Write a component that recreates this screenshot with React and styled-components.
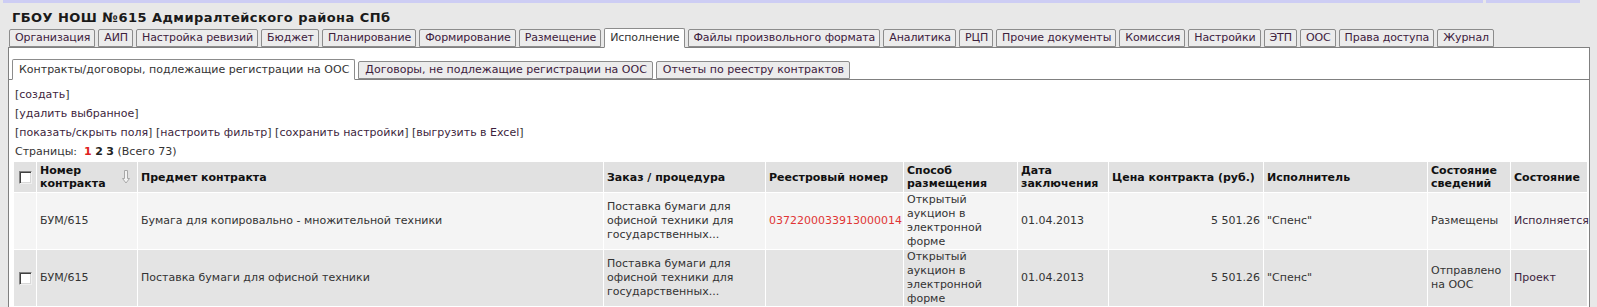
import styled, { createGlobalStyle } from "styled-components"

const GlobalStyle = createGlobalStyle`
    body {
        margin: 0;
        background-color: #e8e8e8;
        font-family: "DejaVu Sans", Verdana, sans-serif;
        font-size: 11px;
        color: #333333;
    }
`

const tabs = [
    "Организация", "АИП", "Настройка ревизий", "Бюджет", "Планирование", "Формирование",
    "Размещение", "Исполнение", "Файлы произвольного формата", "Аналитика", "РЦП",
    "Прочие документы", "Комиссия", "Настройки", "ЭТП", "ООС", "Права доступа", "Журнал"
]

const subTabs = [
    "Контракты/договоры, подлежащие регистрации на ООС",
    "Договоры, не подлежащие регистрации на ООС",
    "Отчеты по реестру контрактов"
]

const columns = [
    { w: 23, title: "" },
    { w: 101, title: "Номер контракта", sort: true },
    { w: 466, title: "Предмет контракта" },
    { w: 162, title: "Заказ / процедура" },
    { w: 138, title: "Реестровый номер" },
    { w: 114, title: "Способ размещения" },
    { w: 91, title: "Дата заключения" },
    { w: 155, title: "Цена контракта (руб.)" },
    { w: 164, title: "Исполнитель" },
    { w: 83, title: "Состояние сведений" },
    { w: 77, title: "Состояние" },
]

const rows = [
    {
        check: false,
        number: "БУМ/615",
        subject: "Бумага для копировально - множительной техники",
        order: "Поставка бумаги для офисной техники для государственных...",
        reg: "0372200033913000014",
        method: "Открытый аукцион в электронной форме",
        date: "01.04.2013",
        price: "5 501.26",
        exec: "\"Спенс\"",
        info: "Размещены",
        state: "Исполняется",
    },
    {
        check: true,
        number: "БУМ/615",
        subject: "Поставка бумаги для офисной техники",
        order: "Поставка бумаги для офисной техники для государственных...",
        reg: "",
        method: "Открытый аукцион в электронной форме",
        date: "01.04.2013",
        price: "5 501.26",
        exec: "\"Спенс\"",
        info: "Отправлено на ООС",
        state: "Проект",
    },
]

function SortArrow() {
    return (
        <ArrowIcon width="8" height="14" viewBox="0 0 8 14">
            <path d="M2.5 0.5 H5.5 V8.5 H7.5 L4 13 L0.5 8.5 H2.5 Z" fill="#f4f4f4" stroke="#a8a8a8" strokeWidth="1" />
        </ArrowIcon>
    )
}

export default function App() {
    return (
        <>
            <GlobalStyle />
            <TopBar>
                <BarPart $w={1480} />
                <BarPart $w={94} />
            </TopBar>
            <Title>ГБОУ НОШ №615 Адмиралтейского района СПб</Title>
            <TabRow>
                {tabs.map((t, i) => (
                    <Tab key={t} $active={i === 7}>{t}</Tab>
                ))}
            </TabRow>
            <Panel>
                <SubTabRow>
                    {subTabs.map((t, i) => (
                        <SubTab key={t} $active={i === 0}>{t}</SubTab>
                    ))}
                </SubTabRow>
                <Content>
                    <ActionLine>[<LinkText>создать</LinkText>]</ActionLine>
                    <ActionLine>[<LinkText>удалить выбранное</LinkText>]</ActionLine>
                    <ActionLine>
                        [<LinkText>показать/скрыть поля</LinkText>] [<LinkText>настроить фильтр</LinkText>] [<LinkText>сохранить настройки</LinkText>] [<LinkText>выгрузить в Excel</LinkText>]
                    </ActionLine>
                    <ActionLine>
                        Страницы:&nbsp; <PageNum $current>1</PageNum> <PageNum>2</PageNum> <PageNum>3</PageNum> (Всего 73)
                    </ActionLine>
                    <Grid>
                        <colgroup>
                            {columns.map((c, i) => <col key={i} style={{ width: c.w }} />)}
                        </colgroup>
                        <thead>
                            <tr>
                                <HeadCell $center><CheckBox /></HeadCell>
                                {columns.slice(1).map(c => (
                                    <HeadCell key={c.title}>
                                        {c.sort ? (
                                            <SortWrap>
                                                <span>{c.title}</span>
                                                <SortArrow />
                                            </SortWrap>
                                        ) : c.title}
                                    </HeadCell>
                                ))}
                            </tr>
                        </thead>
                        <tbody>
                            {rows.map((r, i) => (
                                <Row key={i} $odd={i % 2 === 0}>
                                    <Cell $center>{r.check && <CheckBox />}</Cell>
                                    <Cell>{r.number}</Cell>
                                    <Cell>{r.subject}</Cell>
                                    <Cell>{r.order}</Cell>
                                    <Cell><RegNumber>{r.reg}</RegNumber></Cell>
                                    <Cell>{r.method}</Cell>
                                    <Cell>{r.date}</Cell>
                                    <Cell $right>{r.price}</Cell>
                                    <Cell>{r.exec}</Cell>
                                    <Cell>{r.info}</Cell>
                                    <Cell><LinkText>{r.state}</LinkText></Cell>
                                </Row>
                            ))}
                        </tbody>
                    </Grid>
                </Content>
            </Panel>
        </>
    )
}

const TopBar = styled.div`
    display: flex;
    gap: 3px;
    height: 3px;
    padding-left: 3px;
`

const BarPart = styled.div`
    width: ${p => p.$w}px;
    background-color: #cdcdf4;
`

const Title = styled.h1`
    margin: 7px 0 0 12px;
    font-size: 13px;
    line-height: 16px;
    font-weight: bold;
    letter-spacing: 0.45px;
    color: #1a1a1a;
`

const TabRow = styled.div`
    display: flex;
    align-items: flex-end;
    gap: 3px;
    margin-top: 2px;
    margin-bottom: -1px;
    padding-left: 9px;
    position: relative;
    z-index: 1;
`

const Tab = styled.div`
    height: ${p => p.$active ? "18px" : "16px"};
    line-height: ${p => p.$active ? "18px" : "16px"};
    margin-bottom: ${p => p.$active ? "0" : "1px"};
    padding: 0 4px 0 5px;
    border: 1px solid #8c8c8c;
    border-bottom-color: ${p => p.$active ? "#ffffff" : "#8c8c8c"};
    border-radius: 2px 2px 0 0;
    background-color: ${p => p.$active ? "#ffffff" : "#ececec"};
    color: ${p => p.$active ? "#333333" : "#3d213d"};
    letter-spacing: -0.1px;
    white-space: nowrap;
`

const Panel = styled.div`
    margin: 0 7px 0 8px;
    padding-top: 11px;
    border: 1px solid #808080;
    border-bottom: none;
    background-color: #ffffff;
    min-height: 300px;
`

const SubTabRow = styled.div`
    display: flex;
    align-items: flex-end;
    gap: 3px;
    padding-left: 3px;
    border-bottom: 1px solid #808080;
`

const SubTab = styled.div`
    height: ${p => p.$active ? "19px" : "16px"};
    line-height: ${p => p.$active ? "19px" : "16px"};
    margin-bottom: ${p => p.$active ? "-1px" : "0"};
    padding: 0 5px 0 6px;
    border: 1px solid #8c8c8c;
    border-bottom-color: ${p => p.$active ? "#ffffff" : "#8c8c8c"};
    border-radius: 2px 2px 0 0;
    background-color: ${p => p.$active ? "#ffffff" : "#ececec"};
    color: ${p => p.$active ? "#333333" : "#3d213d"};
    white-space: nowrap;
`

const Content = styled.div`
    padding: 5px 0 0 4px;
`

const ActionLine = styled.div`
    line-height: 19px;
    padding-left: 2px;
    color: #333333;
`

const LinkText = styled.span`
    color: #3d1f3d;
`

const PageNum = styled.b`
    color: ${p => p.$current ? "#e02020" : "#222222"};
`

const Grid = styled.table`
    table-layout: fixed;
    width: 1574px;
    border-collapse: collapse;
`

const HeadCell = styled.th`
    padding: 2px 3px;
    line-height: 13px;
    font-weight: bold;
    text-align: ${p => p.$center ? "center" : "left"};
    color: #111111;
    background-color: #e1e1e1;
    border: 1px solid #ffffff;
    vertical-align: middle;
`

const SortWrap = styled.div`
    display: flex;
    align-items: center;
    justify-content: space-between;
    padding-right: 4px;
`

const ArrowIcon = styled.svg`
    display: block;
    flex: none;
`

const Row = styled.tr`
    background-color: ${p => p.$odd ? "#f4f4f4" : "#e4e4e4"};
`

const Cell = styled.td`
    padding: 0 3px;
    height: 56px;
    line-height: 14px;
    text-align: ${p => p.$right ? "right" : p.$center ? "center" : "left"};
    border: 1px solid #ffffff;
    vertical-align: middle;
    color: #333333;
`

const RegNumber = styled.span`
    color: #e03434;
`

const CheckBox = styled.span`
    display: inline-block;
    vertical-align: middle;
    width: 11px;
    height: 11px;
    background-color: #ffffff;
    border: 1px solid;
    border-color: #848484 #f0f0f0 #f0f0f0 #848484;
    box-shadow: inset 1px 1px #404040, inset -1px -1px #d8d8d8;
`
